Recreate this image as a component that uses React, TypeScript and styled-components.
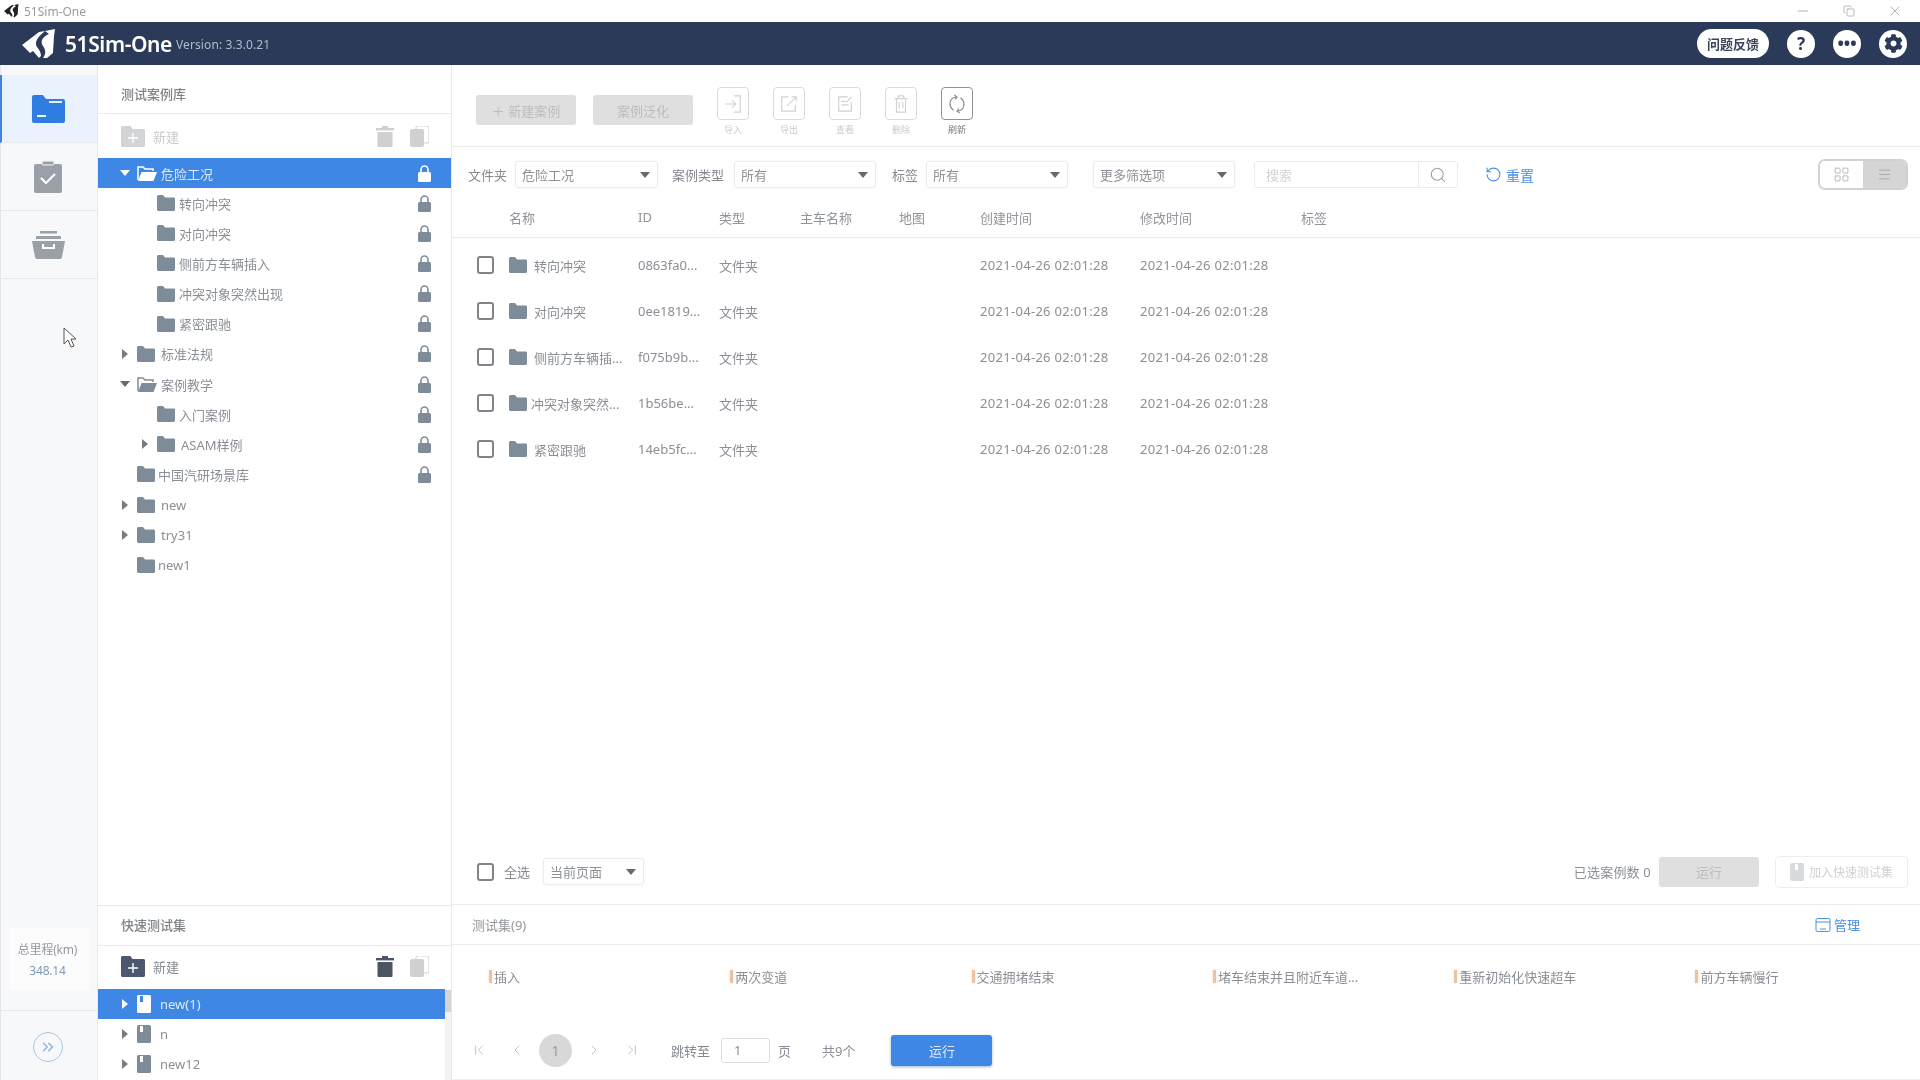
import React from 'react';
import styled, { createGlobalStyle } from 'styled-components';
import { ChevronFirst, ChevronLast, ChevronLeft, ChevronRight, ChevronsRight, Copy, LayoutGrid, Menu, Minus, RotateCcw, Search, X } from 'lucide-react';
import { FaCog } from 'react-icons/fa';

const Global = createGlobalStyle`
  html, body { margin: 0; padding: 0; background: #fff; overflow: hidden; }
  * { box-sizing: border-box; }
  body { font-family: "Noto Sans", "Noto Sans CJK SC", sans-serif; font-size: 13px; color: #8a8f96; }
`;

const Page = styled.div`
  position: relative; width: 1920px; height: 1080px; overflow: hidden;
  display: flex; flex-direction: column; background: #fff; filter: blur(0.35px);
`;
const TitleBar = styled.div`
  height: 22px; flex: none; display: flex; align-items: center; padding-left: 4px; color: #9a9a9a; font-size: 12px; gap: 5px;
`;
const WindowControls = styled.div`
  margin-left: auto; display: flex; align-items: center; gap: 32px; padding-right: 17px; color: #8d8d8d;
`;
const Header = styled.header`
  height: 43px; flex: none; background: #2b3a58; display: flex; align-items: center; padding: 0 13px 0 22px; color: #fff;
`;
const Brand = styled.div`font-size: 21px; font-weight: 600; margin-left: 9px; letter-spacing: -0.4px;`;
const Version = styled.div`font-size: 12px; color: #b4bbc8; margin-left: 4px; margin-top: 1px; letter-spacing: 0.1px;`;
const HeaderRight = styled.div`margin-left: auto; display: flex; align-items: center; gap: 18px;`;
const Pill = styled.div`
  width: 72px; height: 29px; border-radius: 15px; background: #fff; color: #3a465c; font-size: 13px; font-weight: 600;
  display: flex; align-items: center; justify-content: center;
`;
const Round = styled.div`
  width: 28px; height: 28px; border-radius: 50%; background: #fff; color: #2b3a58; font-weight: 700; font-size: 17px;
  display: flex; align-items: center; justify-content: center;
`;
const Body = styled.div`flex: 1; display: flex; min-height: 0;`;

const Rail = styled.nav`
  width: 98px; flex: none; background: #f7f8fa; border-right: 1px solid #e6e8eb; border-left: 1px solid #e4e6ea;
  display: flex; flex-direction: column; padding-top: 10px;
`;
const RailItem = styled.div<{ $active?: boolean }>`
  height: 68px; display: flex; align-items: center; justify-content: center; border-bottom: 1px solid #e6e8eb;
  margin-left: -1px; background: ${p => (p.$active ? '#eaf3fd' : 'transparent')};
  border-left: 2px solid ${p => (p.$active ? '#3f84dd' : 'transparent')}; padding-right: 3px;
`;
const Mileage = styled.div`
  margin: auto 8px 0; height: 62px; background: #fcfcfd; display: flex; flex-direction: column; align-items: center; justify-content: center; gap: 4px;
  font-size: 12px; color: #94999f; letter-spacing: -0.2px; padding-right: 3px;
`;
const MileageValue = styled.div`color: #7d9cb8; font-size: 12px;`;
const Expand = styled.div`
  margin-top: 20px; height: 70px; border-top: 1px solid #e6e8eb; display: flex; align-items: center; justify-content: center; padding: 2px 3px 0 0;
`;
const ExpandCircle = styled.div`
  width: 30px; height: 30px; border: 1.5px solid #a9c6ea; border-radius: 50%; display: flex; align-items: center; justify-content: center; color: #8db3e4;
`;

const TreeColumn = styled.aside`
  width: 354px; flex: none; border-right: 1px solid #e6e8eb; display: flex; flex-direction: column;
`;
const TreeTop = styled.section`flex: 1; min-height: 0;`;
const TreeBottom = styled.section`height: 175px; flex: none; border-top: 1px solid #e6e8eb; overflow: hidden; position: relative;`;
const PanelTitle = styled.div<{ $h: number; $top: number; $bottom?: number }>`
  height: ${p => p.$h}px; display: flex; align-items: center; padding: ${p => p.$top}px 0 ${p => p.$bottom ?? 0}px 23px; border-bottom: 1px solid #e9ebee; color: #7f8489; font-size: 13px; font-weight: 500;
`;
const TreeTools = styled.div<{ $h: number; $dim?: boolean }>`
  height: ${p => p.$h}px; display: flex; align-items: center; padding: 0 22px ${p => (p.$dim ? 0 : 2)}px 23px; gap: 8px; color: ${p => (p.$dim ? '#c9cbce' : '#868a90')};
`;
const ToolSpacer = styled.div`flex: 1;`;
const TreeIcons = styled.div`display: flex; gap: 16px; align-items: center;`;
const Row = styled.div<{ $selected?: boolean; $indent: number; $narrow?: boolean }>`
  height: 30.15px; display: flex; align-items: center; padding-left: ${p => p.$indent}px; padding-right: 20px;
  background: ${p => (p.$selected ? '#3f87e4' : 'transparent')}; color: ${p => (p.$selected ? '#dfeafa' : '#8a8f96')};
  width: ${p => (p.$narrow ? '347px' : '100%')}; font-size: 13px;
`;
const Caret = styled.span`width: 12px; flex: none; display: flex; justify-content: center; margin-right: 6px;`;
const RowLabel = styled.span<{ $gap: number }>`margin-left: ${p => p.$gap}px; flex: 1; white-space: nowrap;`;
const Scrollbar = styled.div`position: absolute; right: 0; top: 84px; width: 6px; bottom: 0; background: #f3f3f3;`;
const ScrollThumb = styled.div`height: 22px; background: #d5d5d5;`;

const Main = styled.main`flex: 1; min-width: 0; display: flex; flex-direction: column; border-bottom: 1px solid #eceef0;`;
const Toolbar = styled.div`
  height: 82px; flex: none; border-bottom: 1px solid #e9ebee; display: flex; gap: 24px; padding: 22px 0 0 24px;
`;
const ButtonGroup = styled.div`display: flex; gap: 17px; padding-top: 8px;`;
const DisabledButton = styled.div<{ $w?: number; $h?: number }>`
  width: ${p => p.$w ?? 100}px; height: ${p => p.$h ?? 30}px; border-radius: 3px; background: #dfdfdf; color: #bcbcbc; font-size: 13px;
  display: flex; align-items: center; justify-content: center; gap: 6px;
`;
const Tool = styled.div<{ $on?: boolean }>`
  width: 32px; display: flex; flex-direction: column; align-items: center; gap: 3px; font-size: 9px; color: ${p => (p.$on ? '#777' : '#c8cbce')};
`;
const ToolBox = styled.div<{ $on?: boolean }>`
  width: 32px; height: 33px; border-radius: 4px; border: 1px solid ${p => (p.$on ? '#8f9296' : '#d9dbdd')};
  display: flex; align-items: center; justify-content: center; color: ${p => (p.$on ? '#8a8d91' : '#cfd2d5')};
`;
const FilterBar = styled.div`
  height: 54px; flex: none; display: flex; align-items: center; padding: 1px 12px 0 16px;
`;
const FilterLabel = styled.span<{ $gap: number; $left?: number }>`
  margin-right: ${p => p.$gap}px; margin-left: ${p => p.$left ?? 0}px; white-space: nowrap; color: #85898f; font-size: 13px;
`;
const Select = styled.div<{ $w?: number; $left?: number }>`
  width: ${p => p.$w ?? 143}px; height: 27px; margin-left: ${p => p.$left ?? 0}px; flex: none; border: 1px solid #ececec; border-radius: 3px; box-shadow: 0 0 2px #f0f0f0;
  display: flex; align-items: center; justify-content: space-between; padding: 0 7px 0 6px; color: #8d9197; font-size: 13px;
`;
const Triangle = styled.span<{ $dir?: 'down' | 'right'; $c?: string }>`
  width: 0; height: 0; display: inline-block;
  ${p => (p.$dir === 'right'
    ? `border-top: 5px solid transparent; border-bottom: 5px solid transparent; border-left: 6px solid ${p.$c ?? '#777b80'};`
    : `border-left: 5px solid transparent; border-right: 5px solid transparent; border-top: 6px solid ${p.$c ?? '#666a70'};`)}
`;
const SearchBox = styled.div`
  width: 204px; height: 27px; margin-left: 19px; border: 1px solid #ececec; border-radius: 3px; display: flex; align-items: center; color: #cfd1d3; font-size: 13px;
`;
const SearchInput = styled.div`flex: 1; padding-left: 11px;`;
const SearchBtn = styled.div`width: 39px; height: 100%; border-left: 1px solid #ececec; display: flex; align-items: center; justify-content: center; color: #9a9ca0;`;
const ResetLink = styled.div`margin-left: 27px; display: flex; align-items: center; gap: 4px; color: #4a8fe3; font-size: 14px;`;
const ViewToggle = styled.div`
  margin-left: auto; width: 90px; height: 31px; display: flex; border: 2px solid #cfd1d3; border-radius: 7px; overflow: hidden; color: #b5b8bb;
`;
const ViewCell = styled.div<{ $on?: boolean }>`
  flex: 1; display: flex; align-items: center; justify-content: center; background: ${p => (p.$on ? '#d5d5d5' : '#fff')}; color: ${p => (p.$on ? '#a3a6a9' : '#b5b8bb')};
`;
const columns = '57px 129px 81px 81px 99px 81px 160px 161px 1fr';
const TableHead = styled.div`
  height: 37px; flex: none; display: grid; grid-template-columns: ${columns}; align-items: center; border-bottom: 1px solid #e9ebee; color: #8f949a; font-size: 13px; padding-bottom: 4px;
`;
const TableBody = styled.div`flex: 1; padding-top: 4px; min-height: 0;`;
const TableRow = styled.div`
  height: 46px; display: grid; grid-template-columns: ${columns}; align-items: center; color: #8a8f95; font-size: 13px; white-space: nowrap;
`;
const Stamp = styled.span`letter-spacing: 0.3px;`;
const CheckCell = styled.div`padding-left: 25px; display: flex;`;
const Check = styled.span`display: block; width: 17px; height: 18px; border: 2px solid #80848a; border-radius: 3px; background: #fff;`;
const NameCell = styled.div<{ $gap: number }>`display: flex; align-items: center; gap: ${p => p.$gap}px;`;
const FootBar = styled.div`
  height: 66px; flex: none; display: flex; align-items: center; padding: 0 12px 0 25px; border-bottom: 1px solid #e9ebee; color: #8a8f95; font-size: 13px;
`;
const SelectedInfo = styled.div`margin-left: auto; margin-right: 8px; font-size: 13px; color: #8a8f95; letter-spacing: 0.2px;`;
const OutlineBtn = styled.div`
  width: 133px; height: 32px; margin-left: 16px; border: 1px solid #eeeeee; border-radius: 4px; display: flex; align-items: center; justify-content: center; gap: 5px; color: #cfd1d3; font-size: 12px; white-space: nowrap;
`;
const SetHead = styled.div`
  height: 40px; flex: none; display: flex; align-items: center; justify-content: space-between; padding: 0 60px 0 20px; border-bottom: 1px solid #e9ebee; color: #94989d; font-size: 13px;
`;
const ManageLink = styled.div`display: flex; align-items: center; gap: 3px; color: #4a8fe3;`;
const SetItems = styled.div`
  height: 64px; flex: none; display: grid; grid-template-columns: repeat(6, 241.3px); align-items: center; padding: 0 0 2px 37px; color: #8a8f95; font-size: 13px;
`;
const SetTag = styled.div`
  position: relative; padding-left: 5px; white-space: nowrap;
  &::before { content: ''; position: absolute; left: 0; top: 3px; bottom: 3px; width: 3px; background: #e9c3a5; box-shadow: 0 0 3px #f8dcc4; }
`;
const Pager = styled.div`height: 70px; flex: none; display: flex; align-items: center; padding: 12px 0 0 8px; color: #8a8f95; font-size: 13px;`;
const PageIcon = styled.span`width: 38px; display: flex; justify-content: center; color: #b5b7ba; flex: none;`;
const PageNum = styled.span`width: 33px; height: 33px; margin: 0 3px; border-radius: 50%; background: #d8d8d8; color: #9a9a9a; display: flex; align-items: center; justify-content: center; font-size: 14px; flex: none;`;
const JumpInput = styled.span`width: 49px; height: 25px; border: 1px solid #dcdcdc; border-radius: 3px; margin: 0 8px 0 11px; padding-left: 12px; display: flex; align-items: center; font-size: 13px;`;
const Total = styled.span`margin-left: 31px;`;
const RunButton = styled.div`
  width: 101px; height: 31px; margin-left: 36px; border-radius: 3px; background: #3f87e4; color: #dfeafa; font-size: 13px; box-shadow: 0 1px 3px #9db3cc;
  display: flex; align-items: center; justify-content: center;
`;
const Pointer = styled.svg`position: absolute; left: 63px; top: 327px;`;

const Logo = ({ s, c = '#fff' }: { s: number; c?: string }) => (
  <svg width={s} height={s * 0.88} viewBox="0 0 34 30">
    <path d="M0 16 L17 3 L23 2 C16 8 12 13 15 18 C17 21 19 23 19 27 L17 29 L11 22 L8 24 Z" fill={c} />
    <path d="M23 2 L33 0 L32 8 L31 24 L24 30 L21 29 C24 25 24 21 21 17 C18 13 20 8 27 5 Z" fill={c} />
  </svg>
);
const FolderIcon = ({ c = '#7e8c99' }: { c?: string }) => (
  <svg width="18" height="16" viewBox="0 0 18 16">
    <path d="M0 1.5C0 .7.7 0 1.5 0H6l2 2.5h8.6c.8 0 1.4.6 1.4 1.4v10.6c0 .8-.6 1.5-1.4 1.5H1.5C.7 16 0 15.3 0 14.5z" fill={c} />
  </svg>
);
const OpenFolder = ({ c }: { c: string }) => (
  <svg width="20" height="15" viewBox="0 0 20 15">
    <path d="M1 14V1h5l2 2h8v2" fill="none" stroke={c} strokeWidth="1.5" />
    <path d="M4.5 6H20l-3.5 9H1z" fill={c} />
  </svg>
);
const Lock = ({ c = '#7e8c99' }: { c?: string }) => (
  <svg width="13" height="17" viewBox="0 0 13 17">
    <path d="M3 8V4.5a3.5 3.5 0 0 1 7 0V8" fill="none" stroke={c} strokeWidth="1.6" />
    <rect y="7" width="13" height="10" rx="1.5" fill={c} />
  </svg>
);
const Book = ({ c, m }: { c: string; m: string }) => (
  <svg width="14" height="18" viewBox="0 0 14 18">
    <rect width="14" height="18" rx="1.5" fill={c} />
    <rect x="3" y="1" width="3" height="6" fill={m} />
  </svg>
);
const AddFolder = ({ c }: { c: string }) => (
  <svg width="24" height="21" viewBox="0 0 24 21">
    <path d="M0 1.5C0 .7.7 0 1.5 0h8l2 3h11c.8 0 1.5.7 1.5 1.5v15c0 .8-.7 1.5-1.5 1.5h-21C.7 21 0 20.3 0 19.5z" fill={c} />
    <path d="M12 7v10M7 12h10" stroke="#fff" strokeWidth="1.4" />
  </svg>
);
const Bin = ({ c }: { c: string }) => (
  <svg width="18" height="21" viewBox="0 0 18 21">
    <rect x="6" width="6" height="2" fill={c} /><rect y="2" width="18" height="2.4" fill={c} />
    <path d="M1.5 6h15v14a1 1 0 0 1-1 1h-13a1 1 0 0 1-1-1z" fill={c} />
  </svg>
);
const Pages = () => (
  <svg width="19" height="21" viewBox="0 0 19 21">
    <rect x="6" y="0" width="13" height="17" rx="2" fill="none" stroke="#d4d5d7" strokeWidth="1.2" />
    <rect x="0" y="3" width="14" height="18" rx="2" fill="#cfd0d2" />
  </svg>
);

const stroke = { fill: 'none', stroke: 'currentColor', strokeWidth: 1.3 };
const ToolIcon = ({ k }: { k: string }) => (
  <svg width="18" height="20" viewBox="0 0 20 22" {...stroke}>
    {k === 'in' && <path d="M1 11h12M9 7l4 4-4 4M11 2h7v18h-7" />}
    {k === 'out' && <path d="M9 3H2v16h15v-7M8 13L18 3M13 3h5v5" />}
    {k === 'view' && <path d="M17 9v10H3V3h10M6 8h5M6 12h8M17 3l-5 6" />}
    {k === 'del' && <path d="M3 5h14M7 5V2h6v3M5 5v15h10V5M8 9v7M12 9v7" />}
    {k === 'ref' && <path d="M6 18C1 14 1 7 6 4l4-1M14 4c5 4 5 11 0 14l-4 1M7 1l3 2-2 3M13 21l-3-2 2-3" />}
  </svg>
);

type Node = { t: string; i: number; g: number; arrow?: 'r' | 'd'; lock?: boolean; open?: boolean; sel?: boolean };
const tree: Node[] = [
  { t: '危险工况', i: 21, g: 4, arrow: 'd', lock: true, open: true, sel: true },
  { t: '转向冲突', i: 59, g: 4, lock: true },
  { t: '对向冲突', i: 59, g: 4, lock: true },
  { t: '侧前方车辆插入', i: 59, g: 4, lock: true },
  { t: '冲突对象突然出现', i: 59, g: 4, lock: true },
  { t: '紧密跟驰', i: 59, g: 4, lock: true },
  { t: '标准法规', i: 21, g: 6, arrow: 'r', lock: true },
  { t: '案例教学', i: 21, g: 4, arrow: 'd', lock: true, open: true },
  { t: '入门案例', i: 59, g: 4, lock: true },
  { t: 'ASAM样例', i: 41, g: 6, arrow: 'r', lock: true },
  { t: '中国汽研场景库', i: 39, g: 3, lock: true },
  { t: 'new', i: 21, g: 6, arrow: 'r' },
  { t: 'try31', i: 21, g: 6, arrow: 'r' },
  { t: 'new1', i: 39, g: 3 },
];
const cases = [
  ['转向冲突', '0863fa0...', 7],
  ['对向冲突', '0ee1819...', 7],
  ['侧前方车辆插...', 'f075b9b...', 7],
  ['冲突对象突然...', '1b56be...', 4],
  ['紧密跟驰', '14eb5fc...', 7],
] as const;
const stamp = '2021-04-26 02:01:28';
const setItems = ['插入', '两次变道', '交通拥堵结束', '堵车结束并且附近车道...', '重新初始化快速超车', '前方车辆慢行'];
const heads = ['', '名称', 'ID', '类型', '主车名称', '地图', '创建时间', '修改时间', '标签'];

export default function App() {
  return (
    <Page>
      <Global />
      <TitleBar>
        <Logo s={15} c="#222" />
        51Sim-One
        <WindowControls>
          <Minus size={16} strokeWidth={1} />
          <Copy size={12} strokeWidth={1.2} />
          <X size={16} strokeWidth={1} />
        </WindowControls>
      </TitleBar>
      <Header>
        <Logo s={34} />
        <Brand>51Sim-One</Brand>
        <Version>Version: 3.3.0.21</Version>
        <HeaderRight>
          <Pill>问题反馈</Pill>
          <Round>?</Round>
          <Round>•••</Round>
          <Round><FaCog size={19} /></Round>
        </HeaderRight>
      </Header>
      <Body>
        <Rail>
          <RailItem $active>
            <svg width="33" height="28" viewBox="0 0 33 28">
              <path d="M0 2a2 2 0 0 1 2-2h9l3 4h17a2 2 0 0 1 2 2v20a2 2 0 0 1-2 2H2a2 2 0 0 1-2-2z" fill="#2f7de1" />
              <path d="M17 7h13" stroke="#eaf3fd" strokeWidth="2" /><path d="M5 21h9" stroke="#eaf3fd" strokeWidth="2" />
            </svg>
          </RailItem>
          <RailItem>
            <svg width="28" height="32" viewBox="0 0 28 32">
              <rect y="3" width="28" height="29" rx="2" fill="#9aa0a8" />
              <rect x="8" y="0" width="12" height="4" rx="1" fill="#9aa0a8" stroke="#f7f8fa" />
              <path d="M7 17l5 5 9-9" fill="none" stroke="#fff" strokeWidth="2.2" />
            </svg>
          </RailItem>
          <RailItem>
            <svg width="33" height="28" viewBox="0 0 33 28">
              <rect x="8" y="0" width="17" height="2.5" fill="#9aa0a8" />
              <rect x="4" y="5" width="25" height="3" fill="#9aa0a8" />
              <path d="M0 10h33l-3 16a2 2 0 0 1-2 2H5a2 2 0 0 1-2-2z" fill="#9aa0a8" />
              <path d="M11 13v4h11v-4" fill="none" stroke="#fff" strokeWidth="2" />
            </svg>
          </RailItem>
          <Mileage>总里程(km)<MileageValue>348.14</MileageValue></Mileage>
          <Expand><ExpandCircle><ChevronsRight size={18} /></ExpandCircle></Expand>
        </Rail>
        <TreeColumn>
          <TreeTop>
            <PanelTitle $h={49} $top={8}>测试案例库</PanelTitle>
            <TreeTools $h={44} $dim>
              <AddFolder c="#d3d4d6" />新建<ToolSpacer />
              <TreeIcons><Bin c="#cfd0d2" /><Pages /></TreeIcons>
            </TreeTools>
            {tree.map(n => (
              <Row key={n.t} $indent={n.i} $selected={n.sel}>
                {n.arrow && <Caret><Triangle $dir={n.arrow === 'r' ? 'right' : 'down'} $c={n.sel ? '#fff' : undefined} /></Caret>}
                {n.open ? <OpenFolder c={n.sel ? '#fff' : '#7e8c99'} /> : <FolderIcon />}
                <RowLabel $gap={n.g}>{n.t}</RowLabel>
                {n.lock && <Lock c={n.sel ? '#fff' : '#7e8c99'} />}
              </Row>
            ))}
          </TreeTop>
          <TreeBottom>
            <PanelTitle $h={40} $top={0} $bottom={2}>快速测试集</PanelTitle>
            <TreeTools $h={43}>
              <AddFolder c="#4d5870" />新建<ToolSpacer />
              <TreeIcons><Bin c="#4c5564" /><Pages /></TreeIcons>
            </TreeTools>
            <Row $indent={21} $selected $narrow>
              <Caret><Triangle $dir="right" $c="#fff" /></Caret>
              <Book c="#fff" m="#3f87e4" /><RowLabel $gap={9}>new(1)</RowLabel>
            </Row>
            <Row $indent={21} $narrow>
              <Caret><Triangle $dir="right" /></Caret>
              <Book c="#7e8c99" m="#fff" /><RowLabel $gap={9}>n</RowLabel>
            </Row>
            <Row $indent={21} $narrow>
              <Caret><Triangle $dir="right" /></Caret>
              <Book c="#7e8c99" m="#fff" /><RowLabel $gap={9}>new12</RowLabel>
            </Row>
            <Scrollbar><ScrollThumb /></Scrollbar>
          </TreeBottom>
        </TreeColumn>
        <Main>
          <Toolbar>
            <ButtonGroup>
              <DisabledButton>＋ 新建案例</DisabledButton>
              <DisabledButton>案例泛化</DisabledButton>
            </ButtonGroup>
            <Tool><ToolBox><ToolIcon k="in" /></ToolBox>导入</Tool>
            <Tool><ToolBox><ToolIcon k="out" /></ToolBox>导出</Tool>
            <Tool><ToolBox><ToolIcon k="view" /></ToolBox>查看</Tool>
            <Tool><ToolBox><ToolIcon k="del" /></ToolBox>删除</Tool>
            <Tool $on><ToolBox $on><ToolIcon k="ref" /></ToolBox>刷新</Tool>
          </Toolbar>
          <FilterBar>
            <FilterLabel $gap={8}>文件夹</FilterLabel>
            <Select>危险工况<Triangle /></Select>
            <FilterLabel $gap={10} $left={14}>案例类型</FilterLabel>
            <Select $w={142}>所有<Triangle /></Select>
            <FilterLabel $gap={8} $left={16}>标签</FilterLabel>
            <Select $w={142}>所有<Triangle /></Select>
            <Select $w={142} $left={25}>更多筛选项<Triangle /></Select>
            <SearchBox><SearchInput>搜索</SearchInput><SearchBtn><Search size={18} strokeWidth={1.4} /></SearchBtn></SearchBox>
            <ResetLink><RotateCcw size={17} strokeWidth={1.5} />重置</ResetLink>
            <ViewToggle>
              <ViewCell><LayoutGrid size={17} strokeWidth={1.4} /></ViewCell>
              <ViewCell $on><Menu size={15} strokeWidth={1.4} /></ViewCell>
            </ViewToggle>
          </FilterBar>
          <TableHead>{heads.map((h, i) => <span key={i}>{h}</span>)}</TableHead>
          <TableBody>
            {cases.map(([name, id, gap]) => (
              <TableRow key={id}>
                <CheckCell><Check /></CheckCell>
                <NameCell $gap={gap}><FolderIcon />{name}</NameCell>
                <span>{id}</span>
                <span>文件夹</span>
                <span /><span />
                <Stamp>{stamp}</Stamp>
                <Stamp>{stamp}</Stamp>
              </TableRow>
            ))}
          </TableBody>
          <FootBar>
            <Check />
            <FilterLabel $gap={13} $left={10}>全选</FilterLabel>
            <Select $w={101}>当前页面<Triangle /></Select>
            <SelectedInfo>已选案例数 0</SelectedInfo>
            <DisabledButton $w={100}>运行</DisabledButton>
            <OutlineBtn>
              <svg width="14" height="18" viewBox="0 0 14 18"><rect width="14" height="18" rx="2" fill="#d8dadc" /><rect x="5" y="1" width="3" height="6" fill="#fff" /></svg>
              加入快速测试集
            </OutlineBtn>
          </FootBar>
          <SetHead>
            测试集(9)
            <ManageLink>
              <svg width="16" height="16" viewBox="0 0 16 16" fill="none" stroke="currentColor"><rect x="1" y="1.5" width="14" height="13" rx="1.5" /><path d="M1 5h14M5 12h6" /></svg>
              管理
            </ManageLink>
          </SetHead>
          <SetItems>{setItems.map(s => <SetTag key={s}>{s}</SetTag>)}</SetItems>
          <Pager>
            <PageIcon><ChevronFirst size={16} strokeWidth={1.3} /></PageIcon>
            <PageIcon><ChevronLeft size={16} strokeWidth={1.3} /></PageIcon>
            <PageNum>1</PageNum>
            <PageIcon><ChevronRight size={16} strokeWidth={1.3} /></PageIcon>
            <PageIcon><ChevronLast size={16} strokeWidth={1.3} /></PageIcon>
            <FilterLabel $gap={0} $left={20}>跳转至</FilterLabel>
            <JumpInput>1</JumpInput>页
            <Total>共9个</Total>
            <RunButton>运行</RunButton>
          </Pager>
        </Main>
      </Body>
      <Pointer width="14" height="22" viewBox="0 0 14 22">
        <path d="M1 1v16l4-4 3 7 3-1-3-7h5z" fill="#fff" stroke="#555" strokeWidth="1" />
      </Pointer>
    </Page>
  );
}
